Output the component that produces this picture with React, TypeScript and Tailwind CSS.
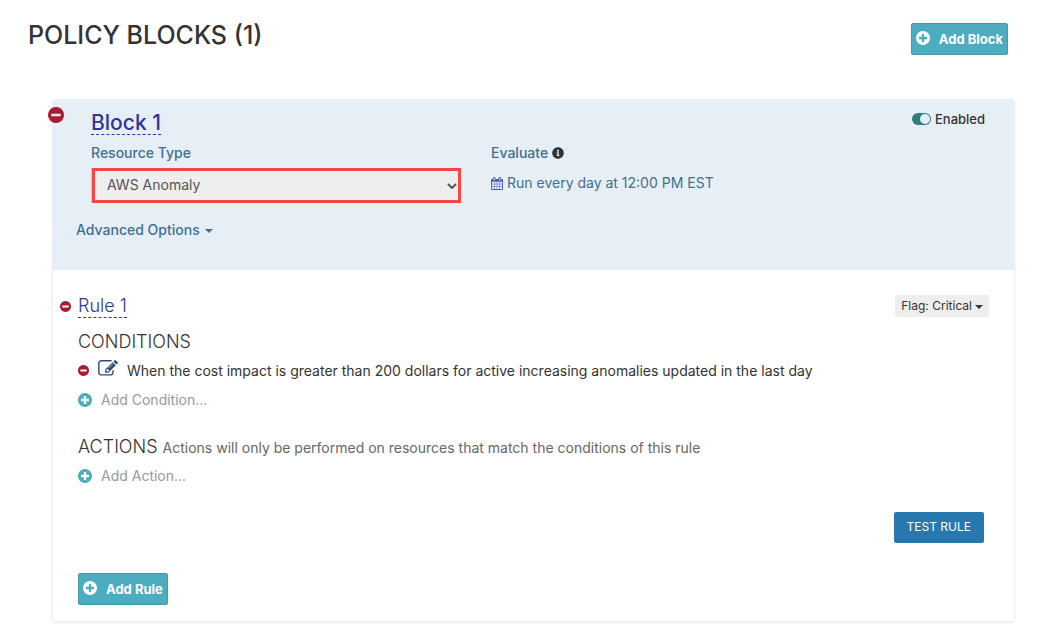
import React, { useState } from "react";
import { FaInfoCircle } from "react-icons/fa";

const MinusIcon: React.FC<{ className: string }> = ({ className }) => (
  <svg viewBox="128 128 1536 1536" fill="currentColor" className={className}>
    <path d="M1344 960v-128q0-26-19-45t-45-19h-768q-26 0-45 19t-19 45v128q0 26 19 45t45 19h768q26 0 45-19t19-45zm320-64q0 209-103 385.5t-279.5 279.5-385.5 103-385.5-103-279.5-279.5-103-385.5 103-385.5 279.5-279.5 385.5-103 385.5 103 279.5 279.5 103 385.5z" />
  </svg>
);

const PlusIcon: React.FC<{ className: string }> = ({ className }) => (
  <svg viewBox="128 128 1536 1536" fill="currentColor" className={className}>
    <path d="M1344 960v-128q0-26-19-45t-45-19h-256v-256q0-26-19-45t-45-19h-128q-26 0-45 19t-19 45v256h-256q-26 0-45 19t-19 45v128q0 26 19 45t45 19h256v256q0 26 19 45t45 19h128q26 0 45-19t19-45v-256h256q26 0 45-19t19-45zm320-64q0 209-103 385.5t-279.5 279.5-385.5 103-385.5-103-279.5-279.5-103-385.5 103-385.5 279.5-279.5 385.5-103 385.5 103 279.5 279.5 103 385.5z" />
  </svg>
);

const EditIcon: React.FC = () => (
  <svg viewBox="0 128 1792 1536" fill="currentColor" className="h-[17px] w-5">
    <path d="M888 1184l116-116-152-152-116 116v56h96v96h56zm440-720q-16-16-33 1l-350 350q-17 17-1 33t33-1l350-350q17-17 1-33zm80 594v190q0 119-84.5 203.5t-203.5 84.5h-832q-119 0-203.5-84.5t-84.5-203.5v-832q0-119 84.5-203.5t203.5-84.5h832q63 0 117 25 15 7 18 23 3 17-9 29l-49 49q-14 14-32 8-23-6-45-6h-832q-66 0-113 47t-47 113v832q0 66 47 113t113 47h832q66 0 113-47t47-113v-126q0-13 9-22l64-64q15-15 35-7t20 29zm-96-738l288 288-672 672h-288v-288zm444 132l-92 92-288-288 92-92q28-28 68-28t68 28l152 152q28 28 28 68t-28 68z" />
  </svg>
);

const CalendarIcon: React.FC = () => (
  <svg viewBox="64 0 1664 1792" fill="currentColor" className="h-[13px] w-3">
    <path d="M192 1664h288v-288h-288v288zm352 0h320v-288h-320v288zm-352-352h288v-320h-288v320zm352 0h320v-320h-320v320zm-352-384h288v-288h-288v288zm736 736h320v-288h-320v288zm-384-736h320v-288h-320v288zm768 736h288v-288h-288v288zm-384-352h320v-320h-320v320zm-352-864v-288q0-13-9.5-22.5t-22.5-9.5h-64q-13 0-22.5 9.5t-9.5 22.5v288q0 13 9.5 22.5t22.5 9.5h64q13 0 22.5-9.5t9.5-22.5zm736 864h288v-320h-288v320zm-384-384h320v-288h-320v288zm384 0h288v-288h-288v288zm32-480v-288q0-13-9.5-22.5t-22.5-9.5h-64q-13 0-22.5 9.5t-9.5 22.5v288q0 13 9.5 22.5t22.5 9.5h64q13 0 22.5-9.5t9.5-22.5zm384-64v1280q0 52-38 90t-90 38h-1408q-52 0-90-38t-38-90v-1280q0-52 38-90t90-38h128v-96q0-66 47-113t113-47h64q66 0 113 47t47 113v96h384v-96q0-66 47-113t113-47h64q66 0 113 47t47 113v96h128q52 0 90 38t38 90z" />
  </svg>
);

const Caret: React.FC = () => (
  <svg viewBox="0 0 8 4" fill="currentColor" className="mt-px h-1 w-2">
    <path d="M0 0h8l-4 4z" />
  </svg>
);

const TealButton: React.FC<{ label: string }> = ({ label }) => (
  <button
    type="button"
    className="flex h-8 items-center gap-[9px] rounded-xs border border-[#3f9bab] bg-[#4badbf] px-1 text-[13px] font-bold text-white"
  >
    <PlusIcon className="mb-[2px] size-[14px]" />
    {label}
  </button>
);

const AddLink: React.FC<{ label: string }> = ({ label }) => (
  <a href="#" className="flex w-fit items-center gap-[9px] text-sm leading-5 text-[#999999]">
    <PlusIcon className="size-[14px] text-[#4badbf]" />
    {label}
  </a>
);

const App: React.FC = () => {
  const [enabled, setEnabled] = useState(true);
  const [resource, setResource] = useState("AWS Anomaly");

  return (
    <div className="bg-white pb-5 font-['Inter',sans-serif] text-sm text-[#333333]">
      <header className="flex items-start justify-between pt-[19px] pr-[39px] pl-7">
        <h1 className="text-[25px] leading-8 font-medium">POLICY BLOCKS (1)</h1>
        <div className="pt-1">
          <TealButton label="Add Block" />
        </div>
      </header>

      <main className="mt-11 mr-8 ml-[52px] rounded-sm shadow-[0_1px_2px_rgba(0,0,0,0.08)]">
        <section className="relative rounded-t-sm bg-[#e7eff6] pt-3 pr-[30px] pb-[30px] pl-6">
          <button
            type="button"
            aria-label="Remove block"
            className="absolute top-2 -left-1 text-[#a91d32]"
          >
            <MinusIcon className="size-4" />
          </button>
          <div className="flex items-start justify-between pl-[15px]">
            <h2 className="border-b border-dashed border-[#2f3699] text-[21px] leading-[23px] font-medium text-[#2f3699]">
              Block 1
            </h2>
            <label className="flex items-center gap-1 text-[13px] leading-4 font-medium">
              <input
                type="checkbox"
                checked={enabled}
                onChange={(e) => setEnabled(e.target.checked)}
                className="peer sr-only"
              />
              <span className="flex h-3 w-[19px] justify-start rounded-full bg-[#8a9a9a] p-px peer-checked:justify-end peer-checked:bg-[#2e7d7a]">
                <span className="size-[10px] rounded-full bg-[#e7eff6]" />
              </span>
              Enabled
            </label>
          </div>

          <div className="mt-2 grid grid-cols-[370px_1fr] gap-[30px] pl-[15px]">
            <div>
              <label
                htmlFor="resource"
                className="block text-sm leading-5 font-medium text-[#41708f]"
              >
                Resource Type
              </label>
              <div className="relative mt-[5px] border-l border-[#cccccc] text-[#555555]">
                <select
                  id="resource"
                  value={resource}
                  onChange={(e) => setResource(e.target.value)}
                  className="block h-[35px] w-full appearance-none border-3 border-[#ff4444] bg-[#eeeeee] px-3 pb-[2px] text-sm"
                >
                  <option>AWS Anomaly</option>
                  <option>AWS Budget</option>
                </select>
                <svg
                  viewBox="0 0 10 6"
                  fill="none"
                  stroke="currentColor"
                  strokeWidth="2"
                  className="pointer-events-none absolute top-[15px] right-1 h-[6px] w-[10px]"
                >
                  <path d="M1 1l4 4 4-4" />
                </svg>
              </div>
            </div>
            <div className="text-[#41708f]">
              <div className="flex items-center gap-1 text-sm leading-5 font-medium">
                Evaluate
                <FaInfoCircle className="size-3 text-[#333333]" />
              </div>
              <a href="#" className="mt-[10px] flex items-center gap-1 text-sm leading-5">
                <span className="text-[#4a5fb0]">
                  <CalendarIcon />
                </span>
                Run every day at 12:00 PM EST
              </a>
            </div>
          </div>

          <button
            type="button"
            className="mt-[17px] flex items-center gap-[5px] text-sm leading-5 font-medium text-[#41708f]"
          >
            Advanced Options
            <Caret />
          </button>
        </section>

        <section className="rounded-b-sm border-x border-b border-[#eeeeee] pt-[25px] pr-[25px] pb-4 pl-[25px]">
          <div className="flex items-start justify-between">
            <div className="-ml-[18px] flex items-center gap-[7px]">
              <button type="button" aria-label="Remove rule" className="text-[#a91d32]">
                <MinusIcon className="size-[11px]" />
              </button>
              <h3 className="border-b border-dashed border-[#2f3699] text-lg leading-[22px] font-light text-[#2f3699]">
                Rule 1
              </h3>
            </div>
            <button
              type="button"
              className="flex h-[22px] items-center gap-[3px] rounded-xs bg-[#eeeeee] px-[6px] text-xs"
            >
              Flag: Critical
              <Caret />
            </button>
          </div>

          <h4 className="mt-3 text-lg leading-6 font-light">CONDITIONS</h4>
          <div className="mt-[6px] flex items-center">
            <button type="button" aria-label="Remove condition" className="text-[#a91d32]">
              <MinusIcon className="size-[11px]" />
            </button>
            <button type="button" aria-label="Edit condition" className="mr-[9px] ml-[9px] pb-1 text-[#2d4b7c]">
              <EditIcon />
            </button>
            <span className="text-sm leading-5">
              When the cost impact is greater than 200 dollars for active increasing anomalies
              updated in the last day
            </span>
          </div>
          <div className="mt-[9px]">
            <AddLink label="Add Condition..." />
          </div>

          <div className="mt-[25px] flex items-baseline gap-[5px]">
            <h4 className="text-lg leading-6 font-light">ACTIONS</h4>
            <span className="text-sm leading-6 text-[#666666]">
              Actions will only be performed on resources that match the conditions of this rule
            </span>
          </div>
          <div className="mt-[6px]">
            <AddLink label="Add Action..." />
          </div>

          <div className="mt-[26px] flex justify-end pr-[5px]">
            <button
              type="button"
              className="h-[31px] rounded-xs bg-[#2878b0] px-[13px] pb-[2px] text-xs text-white"
            >
              TEST RULE
            </button>
          </div>
          <div className="mt-[30px] flex">
            <TealButton label="Add Rule" />
          </div>
        </section>
      </main>
    </div>
  );
};

export default App;
